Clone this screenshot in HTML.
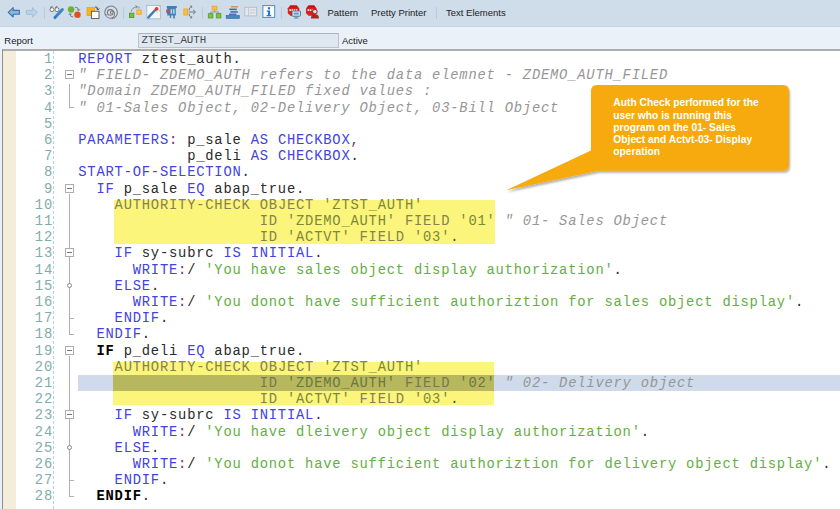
<!DOCTYPE html>
<html><head><meta charset="utf-8"><title>ABAP Editor</title>
<style>
html,body{margin:0;padding:0;}
body{width:840px;height:509px;overflow:hidden;position:relative;background:#fff;font-family:"Liberation Sans",sans-serif;}
#tb{position:absolute;left:0;top:0;width:840px;height:27px;background:#cfdce9;}
#row2{position:absolute;left:0;top:27px;width:840px;height:22px;background:#eaf1f9;}
#tbl{position:absolute;left:0;top:26px;width:840px;height:1px;background:#c4d3e0;}
#edtop{position:absolute;left:2px;top:49px;width:838px;height:2px;background:#adadad;}
#edleft{position:absolute;left:2px;top:49px;width:1px;height:460px;background:#8f8f8f;}
#strip{position:absolute;left:3px;top:51px;width:13px;height:458px;background:#f3edda;}
#lbg{position:absolute;left:0;top:49px;width:2px;height:460px;background:#eaf1f9;}
.ui{position:absolute;font-size:9.5px;color:#222;white-space:pre;line-height:12px;}
#fld{position:absolute;left:138px;top:33px;width:199px;height:13px;background:#dfe7f0;border:1px solid #b9c4d0;border-top-color:#a9b4c0;}
#fldt{position:absolute;left:141.5px;top:34px;font-family:"Liberation Mono",monospace;font-size:10.8px;line-height:12px;color:#4a4a4a;white-space:pre;}
.sep{position:absolute;top:7px;width:1px;height:12px;background:#bccad9;}
.ln{position:absolute;left:16px;width:37px;text-align:right;font-family:"Liberation Mono",monospace;font-size:13.8px;letter-spacing:0.792px;color:#7fadab;white-space:pre;}
.cl{position:absolute;left:78.3px;font-family:"Liberation Mono",monospace;font-size:13.8px;letter-spacing:0.792px;white-space:pre;color:#000;}
.cl span{position:absolute;top:0;}
.k{color:#4343de;}
.s{color:#63af42;}
.c{color:#969696;font-style:italic;}
.n{color:#2a2a2a;}
.p{color:#7a2a7a;}
.b{color:#000;font-weight:bold;}
.hk{color:#868150;}
.hs{color:#7c8838;}
.hn{color:#4a4a20;}
.hk2{color:#77774f;}
.hs2{color:#6c7640;}
.hl{position:absolute;background:#fbf57c;}
#cur{position:absolute;left:78px;top:375px;width:762px;height:15.6px;background:#cfdbeb;}
#curov{position:absolute;left:112.5px;top:375px;width:381.5px;height:15.6px;background:#b7b85e;}
#dots{position:absolute;left:53px;top:51px;width:0;height:458px;border-left:1px dashed #b4d6d4;}
.fb{position:absolute;left:65px;width:7px;height:7px;border:1px solid #adadad;background:#fff;}
.fb i{position:absolute;left:1px;top:3px;width:5px;height:1px;background:#777;}
.vl{position:absolute;left:69px;width:1px;background:#b0b0b0;}
.hlf{position:absolute;left:69px;width:5px;height:1px;background:#b0b0b0;}
.circ{position:absolute;left:67px;width:3px;height:3px;border:1px solid #8a8a8a;border-radius:50%;background:#fff;}
#co{position:absolute;left:0;top:0;}
#cot{position:absolute;left:613.3px;top:97.3px;font-family:"Liberation Sans",sans-serif;font-weight:bold;font-size:10.28px;line-height:12.25px;color:#fff;white-space:pre;}
</style></head><body>

<div id="tb"></div><div id="tbl"></div><div id="row2"></div><div id="lbg"></div><div id="edtop"></div><div id="edleft"></div><div id="strip"></div>
<div class="sep" style="left:44px"></div>
<div class="sep" style="left:123px"></div>
<div class="sep" style="left:202px"></div>
<div class="sep" style="left:281px"></div>
<div class="sep" style="left:436px"></div>
<svg id="ic" width="340" height="27" viewBox="0 0 340 27" style="position:absolute;left:0;top:0">
<!-- back / forward -->
<path d="M8.2 12.3 L13.2 7.6 V10.4 H19.4 V14.3 H13.2 V17 Z" fill="#86b8e0" stroke="#3f73a6" stroke-width="1.1" stroke-linejoin="round"/>
<path d="M37.4 12.3 L32.4 7.6 V10.4 H26.4 V14.3 H32.4 V17 Z" fill="#b9d3ea" stroke="#9fbfdb" stroke-width="1" stroke-linejoin="round"/>
<!-- glasses + pencil -->
<g fill="#f4f6f8" stroke="#707070" stroke-width="0.9"><circle cx="52" cy="9.6" r="2"/><circle cx="57" cy="9.6" r="2"/><path d="M50.3 8.2 Q50.6 6.2 52.4 6.4 M55.3 8.2 Q55.6 6.2 57.4 6.4" fill="none"/></g>
<path d="M62.4 9.6 L55 17.6" stroke="#3d86c6" stroke-width="3" stroke-linecap="round"/>
<path d="M54.2 18.6 L55.4 16 L56.6 17.2 Z" fill="#2d6aa8"/>
<!-- green/red circles -->
<circle cx="71.1" cy="9.5" r="3.2" fill="#6ab52d"/><circle cx="77.5" cy="14.8" r="3.2" fill="#e0501e"/>
<path d="M75 7.2 Q78.5 7 78.6 10.2 M77.2 9.4 L78.7 10.8 L80 9.2 M73.4 17 Q69.8 17.2 70 13.8 M68.8 14.8 L70 13.3 L71.4 14.7" fill="none" stroke="#6d7680" stroke-width="0.9"/>
<!-- orange + white squares -->
<rect x="87" y="7.6" width="7.6" height="8" fill="#fbb316" stroke="#ee9f06" stroke-width="0.7"/>
<rect x="91.4" y="11.3" width="7.6" height="7.2" fill="#fff" stroke="#555" stroke-width="0.9"/>
<path d="M95 7 Q97.6 6.2 97.8 9.4 M96.3 8.6 L97.9 10 L99.3 8.4" fill="none" stroke="#444" stroke-width="0.9"/>
<!-- spiral -->
<g fill="none" stroke="#7c7c7c" stroke-width="1.05"><path d="M111.6 13.6 a1.3 1.3 0 1 1 1.4 -1.2 a2.8 2.8 0 1 1 -2.8 -2.8 a4.3 4.3 0 1 1 -4.3 4.3 M105.6 15.5 a6.3 6.3 0 1 1 6 3.2"/></g>
<!-- green/orange squares with arc -->
<rect x="129.5" y="13.2" width="4.3" height="4.3" fill="#79bd4a" stroke="#4f9a2a" stroke-width="0.9"/>
<rect x="136.9" y="10" width="4.3" height="4.3" fill="#fcc44a" stroke="#f2a51c" stroke-width="0.9"/>
<path d="M131.2 11.6 Q132 7.4 137 6.8 M135.4 5.6 L137.6 6.8 L135.8 8.4 M139 8.6 V6.6" fill="none" stroke="#7a828a" stroke-width="0.9"/>
<!-- wand box -->
<rect x="146.8" y="5.4" width="13.6" height="13.4" fill="#f3f6f9" stroke="#a9b9ca" stroke-width="0.9"/>
<path d="M148.4 17.4 L155 10.2" stroke="#3a7cc0" stroke-width="2.4" stroke-linecap="round"/>
<circle cx="156.6" cy="8.8" r="1.9" fill="#e03a2a"/>
<path d="M158.6 7 l1 -1 M158.8 10.4 l1.2 .6 M156.6 11.6 l.4 1.2" stroke="#f0a020" stroke-width="0.8"/>
<!-- clamp -->
<path d="M166.8 6 H176.8 V8 H175.8 V15.4 H174.8 V18.4 H173.2 V15.4 H171.2 V18 H169.8 V15.4 H167.2 V13 H166.2 V9.4 H167.2 V8 H166.8 Z" fill="#3f80ba"/>
<rect x="170.6" y="9.2" width="4" height="4.4" fill="#b9d3ea"/><rect x="172.2" y="9.2" width="0.9" height="4.4" fill="#3f80ba"/>
<circle cx="168.4" cy="11.1" r="1.6" fill="#e0452f"/>
<!-- orange square + arrows -->
<rect x="183.9" y="9" width="3.8" height="6" fill="#fcc044" stroke="#f2a51c" stroke-width="0.9"/>
<path d="M188.8 12 H195 M193 9.8 L195.6 12 L193 14.2 M189 10.4 Q189.4 7 191.4 6.4 M190.2 6 L191.8 6.2 L191.6 7.8 M189 13.6 Q189.4 17 191.4 17.6 M190.2 18 L191.8 17.8 L191.6 16.2" fill="none" stroke="#6f7780" stroke-width="0.95"/>
<!-- hierarchy -->
<path d="M214.6 10 V12 M210.6 13.4 V12 H218.6 V13.4" fill="none" stroke="#8a9096" stroke-width="0.9"/>
<rect x="212.2" y="6.2" width="4.8" height="3.8" fill="#fcbf3f" stroke="#f0a31a" stroke-width="0.8"/>
<rect x="208.3" y="13.6" width="4.6" height="4.4" fill="#7cc04c" stroke="#54a02c" stroke-width="0.8"/>
<rect x="216.3" y="13.6" width="4.6" height="4.4" fill="#7cc04c" stroke="#54a02c" stroke-width="0.8"/>
<!-- stacked lines -->
<rect x="231" y="6" width="7" height="1.5" fill="#f08a3c"/>
<rect x="229.4" y="8.6" width="7.4" height="1.5" fill="#3b67a8"/>
<rect x="230.4" y="11.2" width="7.4" height="1.5" fill="#3b67a8"/>
<rect x="229" y="13.6" width="7.4" height="1.3" fill="#3b67a8"/>
<rect x="226.2" y="15.4" width="13.2" height="3" fill="#4a86c4" stroke="#2f6aa8" stroke-width="0.6"/>
<!-- grey window -->
<rect x="244.8" y="7.3" width="11.8" height="8.6" fill="#e3e8ee" stroke="#b5bcc4" stroke-width="0.9"/>
<path d="M248.6 7.5 V15.8 M250 10 H255.4 M250 12.8 H255.4" stroke="#bcc3ca" stroke-width="0.9" fill="none"/>
<!-- info -->
<rect x="262.9" y="5.6" width="11.8" height="11.8" fill="#fff" stroke="#3a8fd6" stroke-width="1"/>
<rect x="267.9" y="7.2" width="2.2" height="2.2" fill="#1f78c8"/><path d="M266.8 10.6 H270.1 V15 H271.2 V16.2 H266.6 V15 H267.9 V11.8 H266.8 Z" fill="#1f78c8"/>
<!-- stop + monitor -->
<path d="M290.4 5.6 H296.6 L299.2 8.2 V13.2 L296.6 15.8 H290.4 L287.8 13.2 V8.2 Z" fill="#dc1e1e"/><path d="M290.4 5.6 H296.6 L298.4 7.4 H288.6 Z" fill="#b81616"/>
<path d="M289.4 10.2 H297.4" stroke="#fff" stroke-width="1.7" stroke-dasharray="1.5 .7"/>
<rect x="292" y="11" width="8.4" height="5.2" rx="0.8" fill="#e8f0f7" stroke="#3e5f7c" stroke-width="0.9"/><rect x="293.6" y="12.6" width="5.2" height="2" fill="#5a95c8"/>
<path d="M296.2 16.4 V17.6 M294 18 H298.4" stroke="#3e7f9c" stroke-width="0.9"/>
<!-- stop + person -->
<path d="M308.6 5.6 H314.2 L316.4 8.2 V13.2 L314.2 15.8 H308.6 L306 13.2 V8.2 Z" fill="#dc1e1e"/><path d="M308.6 5.6 H314.2 L315.8 7.4 H306.8 Z" fill="#b81616"/>
<path d="M307.6 10.2 H312.4" stroke="#fff" stroke-width="1.7" stroke-dasharray="1.5 .7"/>
<circle cx="314.9" cy="11.6" r="2.3" fill="#ead8d2" stroke="#8a2620" stroke-width="1"/>
<path d="M310.9 18.6 Q310.9 14.2 314.9 14.2 Q319 14.2 319 18.6 Z" fill="#a02a26"/>
</svg>

<div class="ui" style="left:327.5px;top:7px">Pattern</div>
<div class="ui" style="left:371px;top:7px">Pretty Printer</div>
<div class="ui" style="left:446px;top:7px">Text Elements</div>
<div class="ui" style="left:4.3px;top:35px">Report</div>
<div id="fld"></div><div id="fldt">ZTEST_AUTH</div>
<div class="ui" style="left:342px;top:35px">Active</div>
<div class="hl" style="left:114px;top:200px;width:381px;height:43.5px"></div>
<div class="hl" style="left:112.5px;top:361.5px;width:381.5px;height:43.5px"></div>
<div id="cur"></div><div id="curov"></div>
<div id="dots"></div>
<div class="ln" style="top:50.97px;line-height:17px">1</div>
<div class="cl" style="top:50.97px;line-height:17px"><span class="k" style="left:0.00px">REPORT</span><span class="n" style="left:54.43px"> ztest_auth.</span></div>
<div class="ln" style="top:67.17px;line-height:17px">2</div>
<div class="cl" style="top:67.17px;line-height:17px"><span class="c" style="left:0.00px">" </span><span class="c" style="left:18.14px">FIELD- </span><span class="c" style="left:81.65px">ZDEMO_AUTH </span><span class="c" style="left:181.44px">refers </span><span class="c" style="left:244.94px">to </span><span class="c" style="left:272.16px">the </span><span class="c" style="left:308.45px">data </span><span class="c" style="left:353.81px">elemnet </span><span class="c" style="left:426.38px">- </span><span class="c" style="left:444.53px">ZDEMO_AUTH_FILED</span></div>
<div class="ln" style="top:83.37px;line-height:17px">3</div>
<div class="cl" style="top:83.37px;line-height:17px"><span class="c" style="left:0.00px">"Domain </span><span class="c" style="left:72.58px">ZDEMO_AUTH_FILED </span><span class="c" style="left:226.80px">fixed </span><span class="c" style="left:281.23px">values </span><span class="c" style="left:344.74px">:</span></div>
<div class="ln" style="top:99.57px;line-height:17px">4</div>
<div class="cl" style="top:99.57px;line-height:17px"><span class="c" style="left:0.00px">" </span><span class="c" style="left:18.14px">01-Sales </span><span class="c" style="left:99.79px">Object, </span><span class="c" style="left:172.37px">02-Delivery </span><span class="c" style="left:281.23px">Object, </span><span class="c" style="left:353.81px">03-Bill </span><span class="c" style="left:426.38px">Object</span></div>
<div class="ln" style="top:115.77px;line-height:17px">5</div>
<div class="ln" style="top:131.97px;line-height:17px">6</div>
<div class="cl" style="top:131.97px;line-height:17px"><span class="k" style="left:0.00px">PARAMETERS</span><span class="p" style="left:90.72px">:</span><span class="n" style="left:99.79px"> p_sale </span><span class="k" style="left:172.37px">AS </span><span class="k" style="left:199.58px">CHECKBOX</span><span class="p" style="left:272.16px">,</span></div>
<div class="ln" style="top:148.17px;line-height:17px">7</div>
<div class="cl" style="top:148.17px;line-height:17px"><span class="n" style="left:0.00px">            p_deli </span><span class="k" style="left:172.37px">AS </span><span class="k" style="left:199.58px">CHECKBOX</span><span class="n" style="left:272.16px">.</span></div>
<div class="ln" style="top:164.37px;line-height:17px">8</div>
<div class="cl" style="top:164.37px;line-height:17px"><span class="k" style="left:0.00px">START-OF-SELECTION</span><span class="n" style="left:163.30px">.</span></div>
<div class="ln" style="top:180.57px;line-height:17px">9</div>
<div class="cl" style="top:180.57px;line-height:17px"><span class="k" style="left:0.00px">  IF</span><span class="n" style="left:36.29px"> p_sale </span><span class="k" style="left:108.86px">EQ</span><span class="n" style="left:127.01px"> abap_true.</span></div>
<div class="ln" style="top:196.77px;line-height:17px">10</div>
<div class="cl" style="top:196.77px;line-height:17px"><span class="hk" style="left:0.00px">    AUTHORITY-CHECK </span><span class="hk" style="left:181.44px">OBJECT </span><span class="hs" style="left:244.94px">'ZTST_AUTH'</span></div>
<div class="ln" style="top:212.97px;line-height:17px">11</div>
<div class="cl" style="top:212.97px;line-height:17px"><span class="hk" style="left:0.00px">                    ID </span><span class="hs" style="left:208.66px">'ZDEMO_AUTH'</span><span class="hk" style="left:317.52px"> FIELD </span><span class="hs" style="left:381.02px">'01'</span><span class="c" style="left:417.31px"> " </span><span class="c" style="left:444.53px">01- </span><span class="c" style="left:480.82px">Sales </span><span class="c" style="left:535.25px">Object</span></div>
<div class="ln" style="top:229.17px;line-height:17px">12</div>
<div class="cl" style="top:229.17px;line-height:17px"><span class="hk" style="left:0.00px">                    ID </span><span class="hs" style="left:208.66px">'ACTVT'</span><span class="hk" style="left:272.16px"> FIELD </span><span class="hs" style="left:335.66px">'03'</span><span class="hn" style="left:371.95px">.</span></div>
<div class="ln" style="top:245.37px;line-height:17px">13</div>
<div class="cl" style="top:245.37px;line-height:17px"><span class="k" style="left:0.00px">    IF</span><span class="n" style="left:54.43px"> sy-subrc </span><span class="k" style="left:145.15px">IS </span><span class="k" style="left:172.37px">INITIAL</span><span class="n" style="left:235.87px">.</span></div>
<div class="ln" style="top:261.57px;line-height:17px">14</div>
<div class="cl" style="top:261.57px;line-height:17px"><span class="k" style="left:0.00px">      WRITE</span><span class="p" style="left:99.79px">:</span><span class="n" style="left:108.86px">/ </span><span class="s" style="left:127.01px">'You </span><span class="s" style="left:172.37px">have </span><span class="s" style="left:217.73px">sales </span><span class="s" style="left:272.16px">object </span><span class="s" style="left:335.66px">display </span><span class="s" style="left:408.24px">authorization'</span><span class="n" style="left:535.25px">.</span></div>
<div class="ln" style="top:277.77px;line-height:17px">15</div>
<div class="cl" style="top:277.77px;line-height:17px"><span class="k" style="left:0.00px">    ELSE</span><span class="n" style="left:72.58px">.</span></div>
<div class="ln" style="top:293.97px;line-height:17px">16</div>
<div class="cl" style="top:293.97px;line-height:17px"><span class="k" style="left:0.00px">      WRITE</span><span class="p" style="left:99.79px">:</span><span class="n" style="left:108.86px">/ </span><span class="s" style="left:127.01px">'You </span><span class="s" style="left:172.37px">donot </span><span class="s" style="left:226.80px">have </span><span class="s" style="left:272.16px">sufficient </span><span class="s" style="left:371.95px">authoriztion </span><span class="s" style="left:489.89px">for </span><span class="s" style="left:526.18px">sales </span><span class="s" style="left:580.61px">object </span><span class="s" style="left:644.11px">display'</span><span class="n" style="left:716.69px">.</span></div>
<div class="ln" style="top:310.17px;line-height:17px">17</div>
<div class="cl" style="top:310.17px;line-height:17px"><span class="k" style="left:0.00px">    ENDIF</span><span class="n" style="left:81.65px">.</span></div>
<div class="ln" style="top:326.37px;line-height:17px">18</div>
<div class="cl" style="top:326.37px;line-height:17px"><span class="k" style="left:0.00px">  ENDIF</span><span class="n" style="left:63.50px">.</span></div>
<div class="ln" style="top:342.57px;line-height:17px">19</div>
<div class="cl" style="top:342.57px;line-height:17px"><span class="b" style="left:0.00px">  IF</span><span class="n" style="left:36.29px"> p_deli </span><span class="k" style="left:108.86px">EQ</span><span class="n" style="left:127.01px"> abap_true.</span></div>
<div class="ln" style="top:358.77px;line-height:17px">20</div>
<div class="cl" style="top:358.77px;line-height:17px"><span class="hk" style="left:0.00px">    AUTHORITY-CHECK </span><span class="hk" style="left:181.44px">OBJECT </span><span class="hs" style="left:244.94px">'ZTST_AUTH'</span></div>
<div class="ln" style="top:374.97px;line-height:17px">21</div>
<div class="cl" style="top:374.97px;line-height:17px"><span class="hk2" style="left:0.00px">                    ID </span><span class="hs2" style="left:208.66px">'ZDEMO_AUTH'</span><span class="hk2" style="left:317.52px"> FIELD </span><span class="hs2" style="left:381.02px">'02'</span><span class="c" style="left:417.31px"> " </span><span class="c" style="left:444.53px">02- </span><span class="c" style="left:480.82px">Delivery </span><span class="c" style="left:562.46px">object</span></div>
<div class="ln" style="top:391.17px;line-height:17px">22</div>
<div class="cl" style="top:391.17px;line-height:17px"><span class="hk" style="left:0.00px">                    ID </span><span class="hs" style="left:208.66px">'ACTVT'</span><span class="hk" style="left:272.16px"> FIELD </span><span class="hs" style="left:335.66px">'03'</span><span class="hn" style="left:371.95px">.</span></div>
<div class="ln" style="top:407.37px;line-height:17px">23</div>
<div class="cl" style="top:407.37px;line-height:17px"><span class="k" style="left:0.00px">    IF</span><span class="n" style="left:54.43px"> sy-subrc </span><span class="k" style="left:145.15px">IS </span><span class="k" style="left:172.37px">INITIAL</span><span class="n" style="left:235.87px">.</span></div>
<div class="ln" style="top:423.57px;line-height:17px">24</div>
<div class="cl" style="top:423.57px;line-height:17px"><span class="k" style="left:0.00px">      WRITE</span><span class="p" style="left:99.79px">:</span><span class="n" style="left:108.86px">/ </span><span class="s" style="left:127.01px">'You </span><span class="s" style="left:172.37px">have </span><span class="s" style="left:217.73px">dleivery </span><span class="s" style="left:299.38px">object </span><span class="s" style="left:362.88px">display </span><span class="s" style="left:435.46px">authorization'</span><span class="n" style="left:562.46px">.</span></div>
<div class="ln" style="top:439.77px;line-height:17px">25</div>
<div class="cl" style="top:439.77px;line-height:17px"><span class="k" style="left:0.00px">    ELSE</span><span class="n" style="left:72.58px">.</span></div>
<div class="ln" style="top:455.97px;line-height:17px">26</div>
<div class="cl" style="top:455.97px;line-height:17px"><span class="k" style="left:0.00px">      WRITE</span><span class="p" style="left:99.79px">:</span><span class="n" style="left:108.86px">/ </span><span class="s" style="left:127.01px">'You </span><span class="s" style="left:172.37px">donot </span><span class="s" style="left:226.80px">have </span><span class="s" style="left:272.16px">sufficient </span><span class="s" style="left:371.95px">authoriztion </span><span class="s" style="left:489.89px">for </span><span class="s" style="left:526.18px">delivery </span><span class="s" style="left:607.82px">object </span><span class="s" style="left:671.33px">display'</span><span class="n" style="left:743.90px">.</span></div>
<div class="ln" style="top:472.17px;line-height:17px">27</div>
<div class="cl" style="top:472.17px;line-height:17px"><span class="k" style="left:0.00px">    ENDIF</span><span class="n" style="left:81.65px">.</span></div>
<div class="ln" style="top:488.37px;line-height:17px">28</div>
<div class="cl" style="top:488.37px;line-height:17px"><span class="b" style="left:0.00px">  ENDIF</span><span class="n" style="left:63.50px">.</span></div>
<div class="vl" style="top:83.7px;height:23.4px"></div>
<div class="hlf" style="top:107.0px"></div>
<div class="fb" style="top:70.2px"><i></i></div>
<div class="vl" style="top:193.6px;height:140.3px"></div>
<div class="hlf" style="top:333.8px"></div>
<div class="fb" style="top:183.6px"><i></i></div>
<div class="fb" style="top:248.3px"><i></i></div>
<div class="circ" style="top:282.8px"></div>
<div class="hlf" style="top:317.6px"></div>
<div class="vl" style="top:355.5px;height:140.3px"></div>
<div class="hlf" style="top:495.8px"></div>
<div class="fb" style="top:345.5px"><i></i></div>
<div class="fb" style="top:410.3px"><i></i></div>
<div class="circ" style="top:444.7px"></div>
<div class="hlf" style="top:479.6px"></div>
<svg id="co" width="840" height="509" viewBox="0 0 840 509">
<defs><filter id="sh" x="-10%" y="-10%" width="125%" height="130%"><feGaussianBlur in="SourceAlpha" stdDeviation="1.3"/><feOffset dx="0.6" dy="1.6"/><feComponentTransfer><feFuncA type="linear" slope="0.32"/></feComponentTransfer><feMerge><feMergeNode/><feMergeNode in="SourceGraphic"/></feMerge></filter></defs>
<path filter="url(#sh)" fill="#f6aa10" d="M597 85 H783 Q789 85 789 91 V164.7 Q789 170.7 783 170.7 H598.6 L506.2 190.2 L591 150.5 V91 Q591 85 597 85 Z"/>
</svg>
<div id="cot">Auth Check performed for the
user who is running this
program on the 01- Sales
Object and Actvt-03- Display
operation</div>
</body></html>
